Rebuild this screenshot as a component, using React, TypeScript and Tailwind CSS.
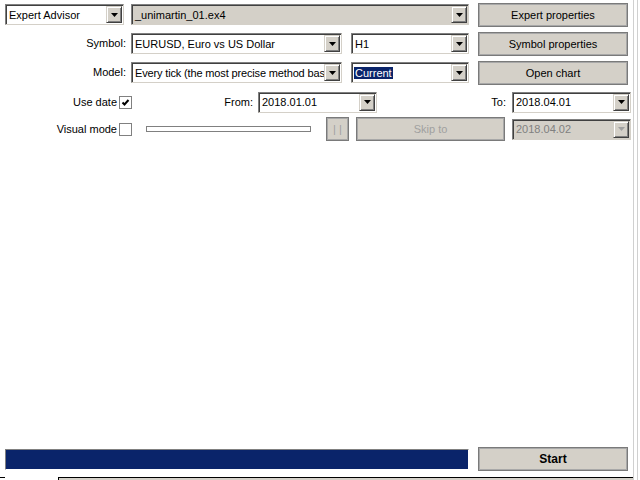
import clsx from "clsx";

const font = "font-['Liberation_Sans',Arial,sans-serif] text-[11px]";

function Arrow({ disabled }: { disabled?: boolean }) {
  return (
    <div className="mr-[1px] flex h-[17px] w-[16px] shrink-0 items-center justify-center border border-t-[#d4d0c8] border-l-[#d4d0c8] border-r-[#404040] border-b-[#404040] bg-[#d4d0c8] shadow-[inset_1px_1px_0_#fff,inset_-1px_-1px_0_#808080]">
      <svg width="7" height="4" viewBox="0 0 7 4">
        <path d="M0 0H7L3.5 4Z" fill={disabled ? "#a0a0a0" : "#000"} />
      </svg>
    </div>
  );
}

function Combo({
  className,
  textClassName,
  text,
  gray,
  disabled,
  selected,
}: {
  className?: string;
  textClassName?: string;
  text: string;
  gray?: boolean;
  disabled?: boolean;
  selected?: boolean;
}) {
  return (
    <div
      className={clsx(
        "flex h-[21px] shrink-0 items-center border border-t-[#808080] border-l-[#808080] border-r-[#d4d0c8] border-b-[#d4d0c8] shadow-[inset_1px_1px_0_#404040]",
        gray || disabled ? "bg-[#d4d0c8]" : "bg-white",
        className
      )}
    >
      <div className={clsx("min-w-0 flex-1 overflow-hidden whitespace-nowrap pl-[2px] leading-[14px]", textClassName)}>
        <span
          className={clsx(
            "px-[1px]",
            selected && "bg-[#0a246a] text-white",
            disabled && "text-[#808080]"
          )}
        >
          {text}
        </span>
      </div>
      <Arrow disabled={disabled} />
    </div>
  );
}

function Button({
  children,
  className,
  disabled,
}: {
  children: React.ReactNode;
  className?: string;
  disabled?: boolean;
}) {
  return (
    <div
      className={clsx(
        "flex h-[24px] shrink-0 items-center justify-center border border-[#7a7a7a] bg-[#d4d0c8] shadow-[inset_1px_1px_0_#a8a8a8,inset_-1px_-1px_0_#a8a8a8]",
        disabled && "text-[#a0a0a0]",
        className
      )}
    >
      {children}
    </div>
  );
}

function Check({ checked }: { checked?: boolean }) {
  return (
    <div className="flex h-[13px] w-[13px] shrink-0 items-center justify-center border border-[#808080] bg-white">
      {checked && (
        <svg width="9" height="9" viewBox="0 0 9 9">
          <path d="M1.5 4.5L3.5 6.5L7.5 2" stroke="#000" strokeWidth="2" fill="none" />
        </svg>
      )}
    </div>
  );
}

export default function App() {
  return (
    <div className={clsx("flex h-[480px] w-[640px] bg-white text-black", font)}>
      <div className="flex w-[633px] flex-col">
        {/* Expert row */}
        <div className="flex h-[29px] items-start pl-[5px] pt-[3px]">
          <Combo className="mt-[1px] w-[119px]" text="Expert Advisor" />
          <Combo className="mt-[1px] ml-[7px] w-[338px]" text="_unimartin_01.ex4" gray />
          <Button className="ml-[9px] w-[150px]">Expert properties</Button>
        </div>

        {/* Symbol row */}
        <div className="flex h-[29px] items-start pt-[3px]">
          <div className="mt-[1px] flex h-[21px] w-[127px] items-center justify-end pr-[1px]">Symbol:</div>
          <Combo className="mt-[1px] ml-[4px] w-[211px]" text="EURUSD, Euro vs US Dollar" />
          <Combo className="mt-[1px] ml-[9px] w-[118px]" text="H1" />
          <Button className="ml-[9px] w-[150px]">Symbol properties</Button>
        </div>

        {/* Model row */}
        <div className="flex h-[29px] items-start pt-[3px]">
          <div className="mt-[1px] flex h-[21px] w-[127px] items-center justify-end pr-[1px]">Model:</div>
          <Combo
            className="mt-[1px] ml-[4px] w-[211px]"
            textClassName="tracking-[-0.15px]"
            text="Every tick (the most precise method bas"
          />
          <Combo className="mt-[1px] ml-[9px] w-[118px]" text="Current" selected />
          <Button className="ml-[9px] w-[150px]">Open chart</Button>
        </div>

        {/* Dates row */}
        <div className="flex h-[30px] items-center">
          <div className="w-[117px] text-right">Use date</div>
          <div className="ml-[2px]">
            <Check checked />
          </div>
          <div className="w-[124px] pr-[3px] text-right">From:</div>
          <Combo className="ml-[2px] w-[119px]" text="2018.01.01" />
          <div className="w-[135px] pr-[6px] text-right">To:</div>
          <Combo className="w-[119px]" text="2018.04.01" />
        </div>

        {/* Visual mode row */}
        <div className="flex h-[24px] items-center">
          <div className="w-[117px] text-right">Visual mode</div>
          <div className="ml-[2px]">
            <Check />
          </div>
          <div className="ml-[14px] h-[6px] w-[165px] border border-[#808080] bg-white" />
          <Button className="ml-[15px] h-[23px] w-[23px]" disabled>
            | |
          </Button>
          <Button className="ml-[7px] h-[23px] w-[149px]" disabled>
            Skip to
          </Button>
          <Combo className="ml-[7px] w-[119px]" text="2018.04.02" disabled />
        </div>

        <div className="flex-1" />

        {/* Progress + start */}
        <div className="flex items-center pl-[5px]">
          <div className="h-[21px] w-[464px] border border-t-[#808080] border-l-[#808080] border-r-white border-b-white bg-[#0a246a]" />
          <Button className="ml-[9px] w-[150px] text-[12px] font-bold">Start</Button>
        </div>

        {/* Tabs edge */}
        <div className="mt-[6px] flex h-[3px]">
          <div className="w-[5px] border-t border-black" />
          <div className="w-[53px]" />
          <div className="flex-1 border-t border-l border-black bg-[#d4d0c8]" />
        </div>
      </div>
      <div className="w-px bg-[#d0d0d0]" />
      <div className="w-[3px]" />
      <div className="w-px bg-[#d0d0d0]" />
    </div>
  );
}
